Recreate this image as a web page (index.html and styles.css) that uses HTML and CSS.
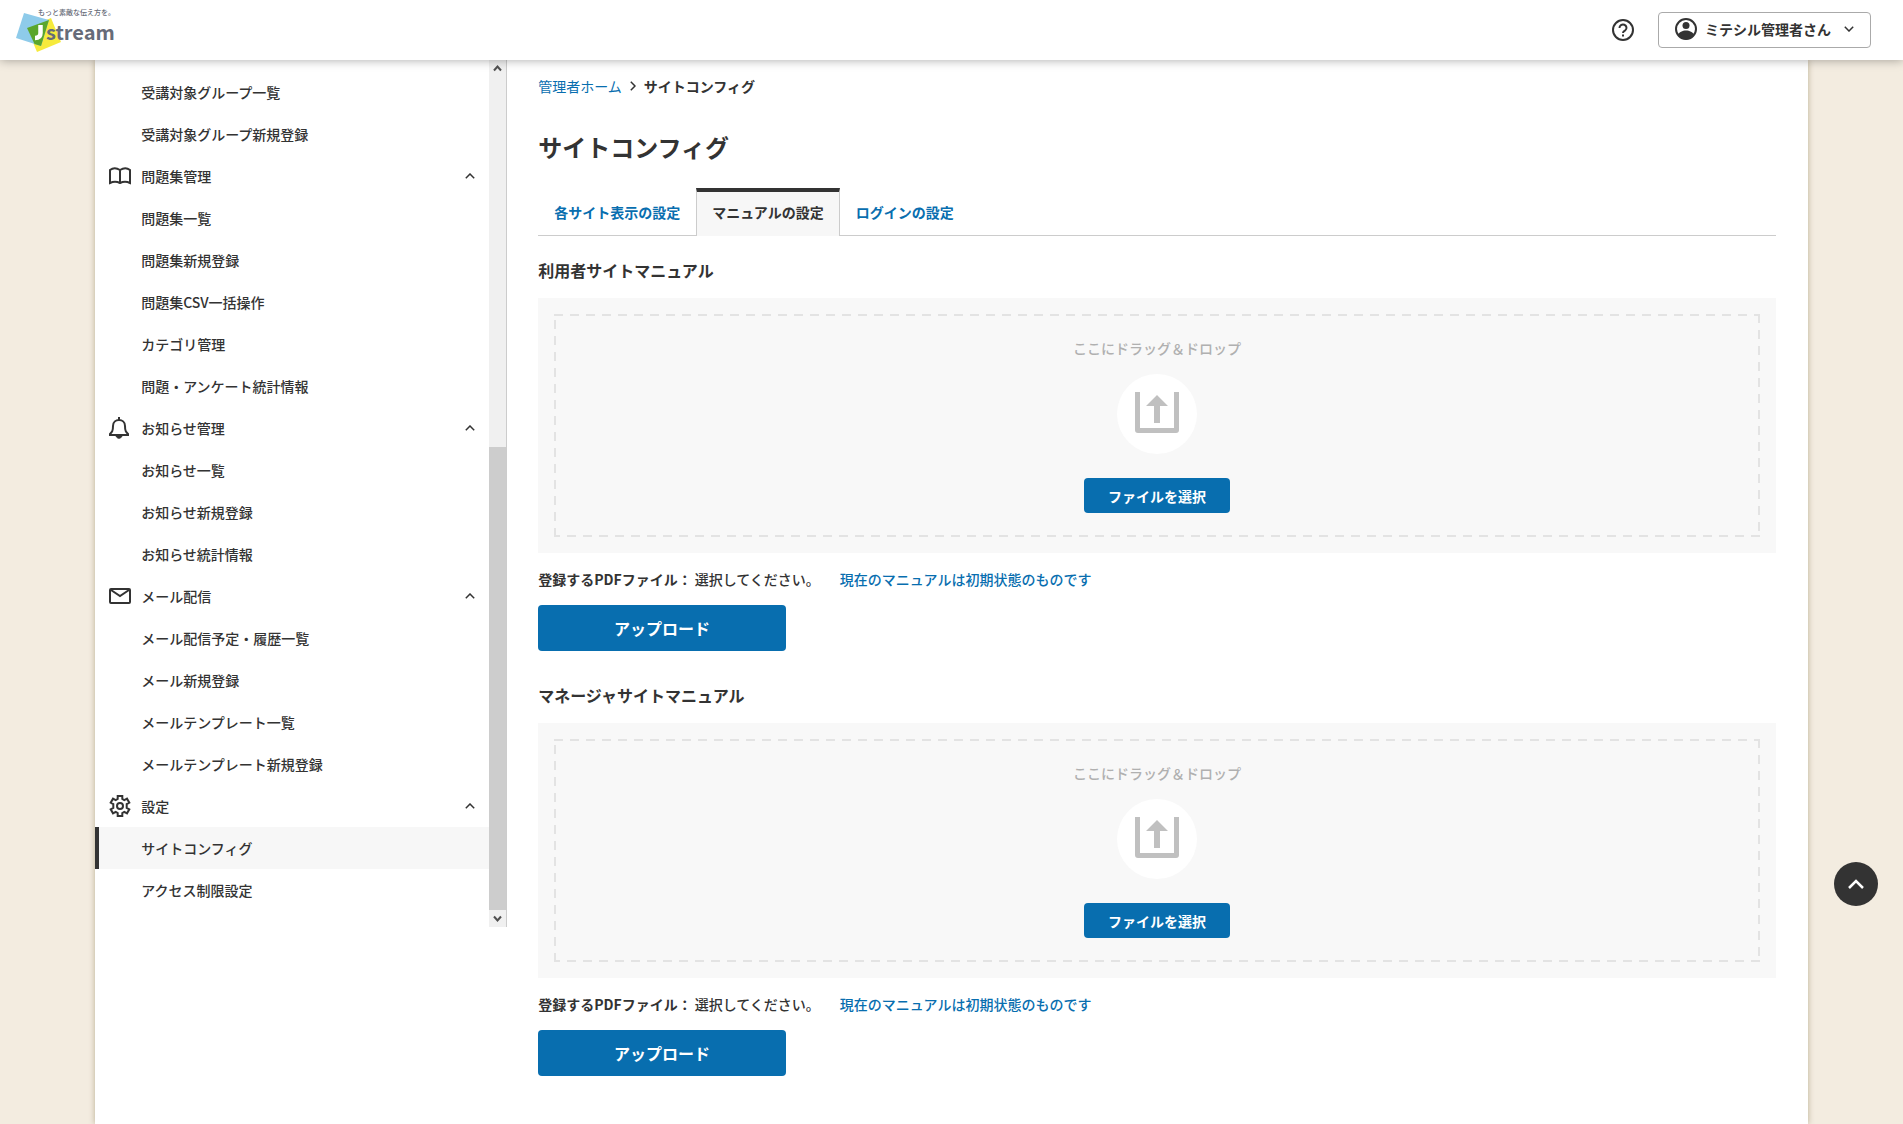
FILE: index.html
```html
<!DOCTYPE html>
<html lang="ja">
<head>
  <meta charset="UTF-8">
  <meta name="viewport" content="width=device-width, initial-scale=1.0">
  <title>サイトコンフィグ</title>
  <link rel="stylesheet" href="styles.css">
</head>
<body>
  <header class="header">
    <a class="logo" href="#" aria-label="Jstream">
      <svg width="100" height="46" viewBox="0 0 100 46">
        <path fill="#f6ea3c" d="M35 10l10 24-24 10-10-24z"/>
        <path fill="#8ecbea" d="M8 5l25 7-8 26-25-8z"/>
        <path fill="#5aa62c" d="M11 20l22-8-8 26-6.500-2z"/>
        <path fill="none" stroke="#fff" stroke-width="4.500" d="M24.500 17v8q0 5-5.500 5"/>
        <text class="logo-copy" x="22" y="7">もっと素敵な伝え方を。</text>
        <text class="logo-name" x="30" y="32">stream</text>
      </svg>
    </a>
    <div class="header-tools">
      <a class="help" href="#" aria-label="ヘルプ">
        <svg width="22" height="22" viewBox="0 0 22 22" fill="none" stroke="#333" stroke-width="2">
          <circle cx="11" cy="11" r="10"/>
          <path d="M7.500 9a3.500 3.300 0 1 1 5.800 2.300C12 12.200 11 12.700 11 14"/>
          <path d="M11 15.500v2"/>
        </svg>
      </a>
      <button class="user" type="button">
        <svg width="22" height="22" viewBox="0 0 22 22">
          <circle cx="11" cy="11" r="10" fill="none" stroke="#333" stroke-width="2"/>
          <circle cx="11" cy="7.500" r="3.500" fill="#333"/>
          <path fill="#333" d="M3 17c2-6 14-6 16 0-4 6-12 6-16 0z"/>
        </svg>
        <span>ミテシル管理者さん</span>
        <svg class="user-arrow" width="10" height="6" viewBox="0 0 10 6" fill="none" stroke="#333" stroke-width="1.500"><path d="M.8.800L5 5 9.200.8"/></svg>
      </button>
    </div>
  </header>

  <div class="page">
    <div class="side">
      <nav class="menu">
        <a class="item" href="#">受講対象グループ一覧</a>
        <a class="item" href="#">受講対象グループ新規登録</a>
        <button class="group" type="button">
          <svg width="24" height="22" viewBox="0 0 24 22" fill="none" stroke="#333" stroke-width="2"><path d="M12 5Q6.500 1.500 2 5v13q5-2.500 10 0 5-2.500 10 0V5Q17.500 1.500 12 5v13"/></svg>
          <span>問題集管理</span>
          <svg class="arrow" width="10" height="6" viewBox="0 0 10 6"><path d="M.8 5.200L5 1l4.200 4.200"/></svg>
        </button>
        <a class="item" href="#">問題集一覧</a>
        <a class="item" href="#">問題集新規登録</a>
        <a class="item" href="#">問題集CSV一括操作</a>
        <a class="item" href="#">カテゴリ管理</a>
        <a class="item" href="#">問題・アンケート統計情報</a>
        <button class="group" type="button">
          <svg width="24" height="22" viewBox="0 0 24 22" fill="none" stroke="#333" stroke-width="2"><path d="M11 0v3M5 9c0-8 12-8 12 0 0 5 1 6 3 8v1H2v-1c2-2 3-3 3-8z"/><path fill="#333" d="M8 19h6c-1 3-5 3-6 0z" stroke-width="1"/></svg>
          <span>お知らせ管理</span>
          <svg class="arrow" width="10" height="6" viewBox="0 0 10 6"><path d="M.8 5.200L5 1l4.200 4.200"/></svg>
        </button>
        <a class="item" href="#">お知らせ一覧</a>
        <a class="item" href="#">お知らせ新規登録</a>
        <a class="item" href="#">お知らせ統計情報</a>
        <button class="group" type="button">
          <svg width="24" height="22" viewBox="0 0 24 22" fill="none" stroke="#333" stroke-width="2"><rect x="2" y="4" width="20" height="14" rx="1"/><path d="M3 5l9 6 9-6"/></svg>
          <span>メール配信</span>
          <svg class="arrow" width="10" height="6" viewBox="0 0 10 6"><path d="M.8 5.200L5 1l4.200 4.200"/></svg>
        </button>
        <a class="item" href="#">メール配信予定・履歴一覧</a>
        <a class="item" href="#">メール新規登録</a>
        <a class="item" href="#">メールテンプレート一覧</a>
        <a class="item" href="#">メールテンプレート新規登録</a>
        <button class="group" type="button">
          <svg width="24" height="22" viewBox="0 0 24 22" fill="none" stroke="#333" stroke-width="2"><path d="M9.700 1h4.600v3l2 1.200 2.700-1.500 2.300 4L18.700 9.200v3.600l2.600 1.500-2.300 4-2.700-1.500-2 1.200v3H9.700v-3l-2-1.200L5 18.300l-2.300-4 2.600-1.500V9.200L2.700 7.700l2.300-4 2.700 1.500 2-1.200z"/><circle cx="12" cy="11" r="3"/></svg>
          <span>設定</span>
          <svg class="arrow" width="10" height="6" viewBox="0 0 10 6"><path d="M.8 5.200L5 1l4.200 4.200"/></svg>
        </button>
        <a class="item current" href="#">サイトコンフィグ</a>
        <a class="item" href="#">アクセス制限設定</a>
      </nav>
      <div class="scroll">
        <svg class="scroll-button" width="17" height="17" viewBox="0 0 17 17"><path d="M5 10.500l3.500-4 3.500 4"/></svg>
        <div class="scroll-track"><div class="scroll-thumb"></div></div>
        <svg class="scroll-button" width="17" height="17" viewBox="0 0 17 17"><path d="M5 6.500l3.500 4 3.500-4"/></svg>
      </div>
    </div>

    <main class="main">
      <div class="crumbs">
        <a href="#">管理者ホーム</a>
        <svg width="6" height="10" viewBox="0 0 6 10" fill="none" stroke="#333" stroke-width="1.500"><path d="M.8.800L5 5 .8 9.200"/></svg>
        <b>サイトコンフィグ</b>
      </div>
      <h1>サイトコンフィグ</h1>
      <div class="tabs">
        <a class="tab" href="#">各サイト表示の設定</a>
        <a class="tab active" href="#">マニュアルの設定</a>
        <a class="tab" href="#">ログインの設定</a>
      </div>

      <section class="manual">
        <h2>利用者サイトマニュアル</h2>
        <div class="drop">
          <div class="drop-area">
            <p>ここにドラッグ＆ドロップ</p>
            <div class="drop-icon">
              <svg width="44" height="41" viewBox="0 0 44 41" fill="#c0c0c0"><path d="M0 0h5v36h34V0h5v38q0 3-3 3H3q-3 0-3-3z"/><path d="M22 3l11 11h-8v17h-6V14h-8z"/></svg>
            </div>
            <button class="select" type="button">ファイルを選択</button>
          </div>
        </div>
        <p class="file"><b>登録するPDFファイル：</b><span>選択してください。</span><a href="#">現在のマニュアルは初期状態のものです</a></p>
        <button class="upload" type="button">アップロード</button>
      </section>

      <section class="manual">
        <h2>マネージャサイトマニュアル</h2>
        <div class="drop">
          <div class="drop-area">
            <p>ここにドラッグ＆ドロップ</p>
            <div class="drop-icon">
              <svg width="44" height="41" viewBox="0 0 44 41" fill="#c0c0c0"><path d="M0 0h5v36h34V0h5v38q0 3-3 3H3q-3 0-3-3z"/><path d="M22 3l11 11h-8v17h-6V14h-8z"/></svg>
            </div>
            <button class="select" type="button">ファイルを選択</button>
          </div>
        </div>
        <p class="file"><b>登録するPDFファイル：</b><span>選択してください。</span><a href="#">現在のマニュアルは初期状態のものです</a></p>
        <button class="upload" type="button">アップロード</button>
      </section>
    </main>
  </div>

  <a class="to-top" href="#" aria-label="ページの先頭へ">
    <svg width="16" height="10" viewBox="0 0 16 10" fill="none" stroke="#fff" stroke-width="2.500"><path d="M1 9l7-7 7 7"/></svg>
  </a>
</body>
</html>
```
FILE: styles.css
```css
* {
  box-sizing: border-box;
}

body {
  margin: 0;
  background: #f3ece0;
  color: #333;
  font-family: "Noto Sans CJK JP", sans-serif;
  font-size: 14px;
  line-height: 20px;
}

h1, h2, p {
  margin: 0;
}

a {
  color: #086eaf;
  text-decoration: none;
}

button {
  border: 0;
  padding: 0;
  color: inherit;
  font: inherit;
  cursor: pointer;
}

svg {
  display: block;
  flex: none;
}

/* header */
.header {
  position: sticky;
  top: 0;
  z-index: 10;
  display: flex;
  justify-content: space-between;
  height: 60px;
  padding: 0 32px 0 16px;
  background: #fff;
  box-shadow: 0 0 10px rgba(0, 0, 0, 0.35);
}

.logo {
  padding-top: 8px;
}

.logo svg {
  overflow: visible;
}

.logo-copy {
  fill: #666b78;
  font-size: 7px;
  font-weight: 500;
}

.logo-name {
  fill: #666b78;
  font-size: 20px;
  font-weight: bold;
}

.header-tools {
  display: flex;
  align-items: center;
  gap: 24px;
}

.user {
  display: flex;
  align-items: center;
  gap: 8px;
  height: 36px;
  padding: 0 16px 2px;
  border: 1px solid #aaa;
  border-radius: 4px;
  background: #fff;
  font-weight: bold;
}

.user-arrow {
  margin-left: 5px;
}

/* layout */
.page {
  display: flex;
  align-items: flex-start;
  min-height: calc(100vh - 60px);
  margin: 0 5%;
  background: #fff;
  box-shadow: 0 0 6px rgba(80, 60, 0, 0.35);
}

.side {
  display: flex;
  flex: none;
  width: 412px;
  border-right: 1px solid #ccc;
}

/* side menu */
.menu {
  flex: 1;
  padding: 11px 0 16px;
}

.item,
.group {
  display: flex;
  align-items: center;
  width: 100%;
  height: 42px;
  background: none;
  color: #333;
  font-weight: 500;
}

.item {
  padding-left: 46px;
}

.group {
  gap: 9px;
  padding: 0 14px 0 13px;
}

.current {
  padding-left: 42px;
  border-left: 4px solid #333;
  background: #f7f7f7;
}

.arrow {
  margin-left: auto;
  fill: none;
  stroke: #333;
  stroke-width: 1.5;
}

.scroll {
  display: flex;
  flex-direction: column;
  width: 17px;
  background: #f0f0f0;
}

.scroll-button {
  fill: none;
  stroke: #505050;
  stroke-width: 2;
}

.scroll-track {
  display: flex;
  flex: 1;
  flex-direction: column;
  justify-content: flex-end;
}

.scroll-thumb {
  height: 463px;
  background: #cdcdcd;
}

/* contents */
.main {
  flex: 1;
  padding: 16px 32px 48px 31px;
}

.crumbs {
  display: flex;
  align-items: center;
  gap: 8px;
}

h1 {
  margin-top: 31px;
  font-size: 24px;
  line-height: 40px;
}

.tabs {
  display: flex;
  margin-top: 21px;
  border-bottom: 1px solid #ccc;
}

.tab {
  height: 47px;
  margin-bottom: -1px;
  padding: 10px 16px 0;
  border-top: 4px solid transparent;
  font-weight: bold;
}

.tab.active {
  height: 48px;
  padding: 10px 15px 0;
  border: 1px solid #ccc;
  border-top: 4px solid #333;
  border-bottom: 0;
  background: #f7f7f7;
  color: #333;
}

.manual {
  margin-top: 22px;
}

.manual + .manual {
  margin-top: 32px;
}

h2 {
  font-size: 16px;
  line-height: 24px;
}

.drop {
  margin-top: 16px;
  padding: 16px;
  background: #f8f8f8;
}

/* dashed frame, running clockwise from the top left corner */
.drop-area {
  display: flex;
  flex-direction: column;
  align-items: center;
  padding: 24px 0;
  background-image:
    repeating-linear-gradient(to right, #e3e3e3 0 9px, transparent 9px 16px),
    repeating-linear-gradient(to bottom, #e3e3e3 0 9px, transparent 9px 16px),
    repeating-linear-gradient(to left, #e3e3e3 0 9px, transparent 9px 16px),
    repeating-linear-gradient(to top, #e3e3e3 0 9px, transparent 9px 16px);
  background-position: left top, right top, left bottom, left top;
  background-size: 100% 2px, 2px 100%, 100% 2px, 2px 100%;
  background-repeat: no-repeat;
  color: #b0b0b0;
  font-weight: 500;
}

.drop-icon {
  display: flex;
  justify-content: center;
  width: 80px;
  height: 80px;
  margin: 16px 0 24px;
  padding-top: 18px;
  border-radius: 50%;
  background: #fff;
}

.select,
.upload {
  display: block;
  border-radius: 4px;
  background: #086eaf;
  color: #fff;
  font-weight: bold;
}

.select {
  height: 35px;
  padding: 0 24px;
}

.file {
  display: flex;
  margin-top: 16px;
  font-weight: 500;
}

.file span {
  margin: 0 20px 0 3px;
}

.upload {
  width: 20%;
  height: 46px;
  margin-top: 16px;
  font-size: 16px;
}

.to-top {
  position: fixed;
  right: 25px;
  bottom: 218px;
  display: flex;
  align-items: center;
  justify-content: center;
  width: 44px;
  height: 44px;
  border-radius: 50%;
  background: #333;
}
```
